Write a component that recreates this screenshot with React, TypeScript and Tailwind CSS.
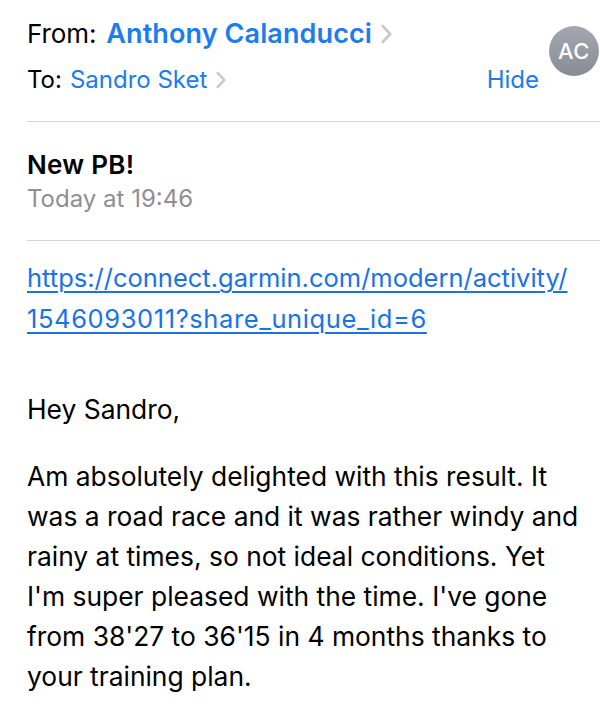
import React from "react";

const Chevron = ({ h = 16 }: { h?: number }) => (
  <svg width={h * 0.55} height={h} viewBox="0 0 9 16" fill="none" className="inline-block">
    <path d="M1.5 1.5 L7.5 8 L1.5 14.5" stroke="#c7c7cc" strokeWidth="2.2" strokeLinecap="round" strokeLinejoin="round" />
  </svg>
);

export default function App() {
  const font = { fontFamily: "Inter, 'Liberation Sans', sans-serif" };
  return (
    <div className="relative w-[600px] h-[714px] overflow-hidden bg-white text-black" style={font}>
      <div className="pl-[27px]">
        {/* From */}
        <div className="pt-[18px] flex items-center h-[50px] text-[26px] leading-[32px] tracking-[-0.1px]">
          <span>From:</span>
          <span className="ml-[10px] font-semibold text-[#1a7cf0] text-[27px] tracking-[0.1px]">Anthony Calanducci</span>
          <span className="ml-[9px] flex items-center"><Chevron h={20} /></span>
        </div>
        {/* To */}
        <div className="mt-[15px] flex items-center h-[30px] text-[24px] leading-[30px] pr-[61px]">
          <span>To:</span>
          <span className="ml-[8px] text-[#1a7cf0]">Sandro Sket</span>
          <span className="ml-[9px] flex items-center"><Chevron h={18} /></span>
          <span className="ml-auto text-[#1a7cf0]">Hide</span>
        </div>
        <div className="mt-[26px] h-px bg-[#d6d6da]" />
        <div className="mt-[28px] text-[26px] leading-[30px] font-semibold tracking-[0.3px]">New PB!</div>
        <div className="mt-[4px] text-[24px] leading-[30px] text-[#8e8e93]">Today at 19:46</div>
        <div className="mt-[26px] h-px bg-[#d6d6da]" />
        <div className="mt-[16px] text-[25.5px] leading-[41px] text-[#1a72e6] underline underline-offset-[4px] decoration-[1.5px]">
          <div className="whitespace-nowrap">https://connect.garmin.com/modern/activity/</div>
          <div className="whitespace-nowrap tracking-[0.6px]">1546093011?share_unique_id=6</div>
        </div>
        <div className="mt-[50px] text-[26.4px] leading-[40px]">Hey Sandro,</div>
        <div className="mt-[27px] text-[26.4px] leading-[40px]">
          <div className="whitespace-nowrap">Am absolutely delighted with this result. It</div>
          <div className="whitespace-nowrap">was a road race and it was rather windy and</div>
          <div className="whitespace-nowrap">rainy at times, so not ideal conditions. Yet</div>
          <div className="whitespace-nowrap">I'm super pleased with the time. I've gone</div>
          <div className="whitespace-nowrap">from 38'27 to 36'15 in 4 months thanks to</div>
          <div className="whitespace-nowrap">your training plan.</div>
        </div>
      </div>
      {/* Avatar */}
      <div className="absolute left-[549px] top-[26px] w-[50px] h-[50px] rounded-full bg-gradient-to-b from-[#a5a7b0] to-[#8a8c95] flex items-center justify-center text-white text-[22px] font-medium tracking-[0.5px]">
        AC
      </div>
    </div>
  );
}
